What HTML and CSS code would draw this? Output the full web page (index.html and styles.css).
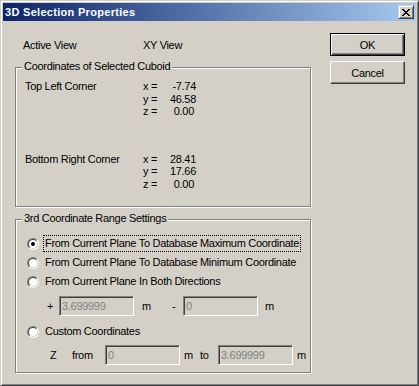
FILE: index.html
```html
<!DOCTYPE html>
<html lang="en">
<head>
    <meta charset="UTF-8">
    <title>3D Selection Properties</title>
    <link rel="stylesheet" href="styles.css">
</head>
<body>
    <div class="window">
        <div class="titlebar">
            <span class="title">3D Selection Properties</span>
            <span class="close-btn">
                <svg width="8" height="7" viewBox="0 0 8 7" shape-rendering="crispEdges">
                    <path d="M0 0h2v1h-2z M6 0h2v1h-2z M1 1h2v1h-2z M5 1h2v1h-2z M2 2h4v1h-4z M3 3h2v1h-2z M2 4h4v1h-4z M1 5h2v1h-2z M5 5h2v1h-2z M0 6h2v1h-2z M6 6h2v1h-2z" fill="#000"/>
                </svg>
            </span>
        </div>

        <div class="client">
            <div class="main">
                <div class="info-row">
                    <span class="info-label">Active View</span>
                    <span>XY View</span>
                </div>

                <div class="group group-coords">
                    <span class="legend">Coordinates of Selected Cuboid</span>
                    <div class="corner">
                        <div class="coord-row"><span class="coord-label">Top Left Corner</span><span class="axis">x =</span><span class="num">-7.74</span></div>
                        <div class="coord-row"><span class="coord-label"></span><span class="axis">y =</span><span class="num">46.58</span></div>
                        <div class="coord-row"><span class="coord-label"></span><span class="axis">z =</span><span class="num num-zero">0.00</span></div>
                    </div>
                    <div class="corner corner-bottom">
                        <div class="coord-row"><span class="coord-label">Bottom Right Corner</span><span class="axis">x =</span><span class="num">28.41</span></div>
                        <div class="coord-row"><span class="coord-label"></span><span class="axis">y =</span><span class="num">17.66</span></div>
                        <div class="coord-row"><span class="coord-label"></span><span class="axis">z =</span><span class="num num-zero">0.00</span></div>
                    </div>
                </div>

                <div class="group group-range">
                    <span class="legend">3rd Coordinate Range Settings</span>
                    <div class="radio-row">
                        <span class="radio checked"><span class="radio-inner"></span></span>
                        <span class="radio-label focused">From Current Plane To Database Maximum Coordinate</span>
                    </div>
                    <div class="radio-row">
                        <span class="radio"><span class="radio-inner"></span></span>
                        <span class="radio-label">From Current Plane To Database Minimum Coordinate</span>
                    </div>
                    <div class="radio-row">
                        <span class="radio"><span class="radio-inner"></span></span>
                        <span class="radio-label">From Current Plane In Both Directions</span>
                    </div>
                    <div class="field-row field-row-both">
                        <span class="sign">+</span>
                        <span class="edit">3.699999</span>
                        <span class="unit unit-first">m</span>
                        <span class="sign sign-minus">-</span>
                        <span class="edit">0</span>
                        <span class="unit">m</span>
                    </div>
                    <div class="radio-row radio-custom">
                        <span class="radio"><span class="radio-inner"></span></span>
                        <span class="radio-label">Custom Coordinates</span>
                    </div>
                    <div class="field-row field-row-custom">
                        <span class="z-label">Z</span>
                        <span class="from-label">from</span>
                        <span class="edit">0</span>
                        <span class="unit unit-short">m</span>
                        <span class="to-label">to</span>
                        <span class="edit">3.699999</span>
                        <span class="unit unit-last">m</span>
                    </div>
                </div>
            </div>

            <div class="side">
                <button class="btn btn-default">OK</button>
                <button class="btn">Cancel</button>
            </div>
        </div>
    </div>
</body>
</html>
```

FILE: styles.css
```css
body {
    margin: 0;
    background: #d4d0c8;
    font-family: "Liberation Sans", Arial, sans-serif;
    font-size: 11px;
    letter-spacing: -0.3px;
    color: #000;
}

.window {
    width: 419px;
    height: 386px;
    box-sizing: border-box;
    padding: 2px;
    border: 1px solid;
    border-color: #d4d0c8 #404040 #404040 #d4d0c8;
    box-shadow: inset 1px 1px 0 #fff, inset -1px -1px 0 #808080;
    background: #d4d0c8;
}

/* title bar */
.titlebar {
    height: 18px;
    display: flex;
    align-items: center;
    padding: 0 2px;
    background: linear-gradient(to right, #0a246a, #a6caf0);
}

.title {
    flex: 1;
    color: #fff;
    font-weight: bold;
    letter-spacing: 0.3px;
    line-height: 18px;
}

.close-btn {
    width: 16px;
    height: 14px;
    box-sizing: border-box;
    display: flex;
    align-items: center;
    justify-content: center;
    border: 1px solid;
    border-color: #d4d0c8 #404040 #404040 #d4d0c8;
    box-shadow: inset 1px 1px 0 #fff, inset -1px -1px 0 #808080;
    background: #d4d0c8;
}

.close-btn svg {
    display: block;
}

/* client area */
.client {
    display: flex;
    padding: 12px 0 0 12px;
}

.main {
    width: 296px;
    padding-top: 6px;
}

.info-row {
    display: flex;
    line-height: 13px;
    padding-left: 8px;
}

.info-label {
    width: 120px;
}

.group {
    position: relative;
    box-sizing: border-box;
    border: 1px solid #808080;
    box-shadow: 1px 1px 0 #fff, inset 1px 1px 0 #fff;
}

.legend {
    position: absolute;
    top: -8px;
    left: 6px;
    padding: 0 2px;
    line-height: 13px;
    background: #d4d0c8;
}

.group-coords {
    height: 140px;
    margin-top: 15px;
    padding: 12px 0 0 9px;
}

.corner-bottom {
    margin-top: 35px;
}

.coord-row {
    display: flex;
    height: 12.5px;
    line-height: 13px;
}

.coord-label {
    width: 118px;
}

.axis {
    width: 23px;
}

.num {
    width: 30px;
    text-align: right;
}

.num-zero {
    width: 28px;
}

/* range settings */
.group-range {
    height: 154px;
    margin-top: 12px;
    padding: 15px 0 0 11px;
}

.radio-row {
    display: flex;
    align-items: center;
    height: 17px;
    margin-bottom: 2px;
}

.radio {
    width: 12px;
    height: 12px;
    box-sizing: border-box;
    border-radius: 50%;
    border: 1px solid;
    border-color: #808080 #fff #fff #808080;
}

.radio-inner {
    display: flex;
    align-items: center;
    justify-content: center;
    width: 10px;
    height: 10px;
    box-sizing: border-box;
    border-radius: 50%;
    border: 1px solid;
    border-color: #404040 #d4d0c8 #d4d0c8 #404040;
    background: #fff;
}

.radio.checked .radio-inner::after {
    content: "";
    width: 4px;
    height: 4px;
    border-radius: 50%;
    background: #000;
}

.radio-label {
    margin-left: 4px;
    padding: 0 1px;
    line-height: 15px;
    border: 1px solid transparent;
}

.radio-label.focused {
    border: 1px dotted #000;
}

.field-row {
    display: flex;
    align-items: center;
    height: 20px;
}

.field-row-both {
    margin: 6px 0 0 20px;
}

.sign {
    width: 12px;
}

.sign-minus {
    width: 11px;
}

.edit {
    width: 75px;
    height: 20px;
    box-sizing: border-box;
    padding-left: 2px;
    line-height: 18px;
    color: #808080;
    border: 1px solid;
    border-color: #808080 #fff #fff #808080;
    box-shadow: inset 1px 1px 0 #404040, inset -1px -1px 0 #d4d0c8;
}

.unit {
    margin-left: 7px;
}

.unit-first {
    margin-left: 8px;
    width: 30px;
}

.radio-custom {
    margin-top: 7px;
    margin-bottom: 0;
}

.field-row-custom {
    margin: 5px 0 0 23px;
}

.z-label {
    width: 22px;
}

.from-label {
    width: 33px;
}

.unit-short {
    margin-left: 4px;
    width: 16px;
}

.to-label {
    width: 18px;
}

.unit-last {
    margin-left: 4px;
}

/* buttons */
.side {
    display: flex;
    flex-direction: column;
    gap: 5px;
    margin-left: 19px;
}

.btn {
    width: 75px;
    height: 23px;
    box-sizing: border-box;
    padding: 0;
    font: inherit;
    letter-spacing: inherit;
    color: #000;
    background: #d4d0c8;
    border: 1px solid;
    border-color: #fff #404040 #404040 #fff;
    box-shadow: inset -1px -1px 0 #808080;
}

.btn-default {
    border-color: #000;
    box-shadow: inset 1px 1px 0 #fff, inset -1px -1px 0 #404040, inset -2px -2px 0 #808080;
}
```
